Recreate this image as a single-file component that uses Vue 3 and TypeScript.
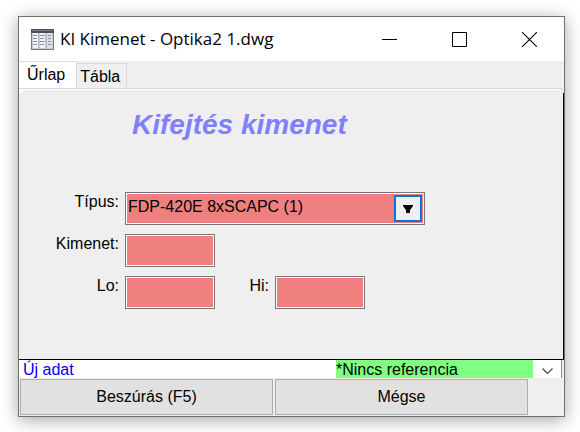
<script setup lang="ts">
import { ref } from 'vue'

const tabs: string[] = ['Űrlap', 'Tábla']
const activeTab = ref<string>('Űrlap')
const types: string[] = ['FDP-420E 8xSCAPC (1)']
const selectedType = ref<string>(types[0])
const output = ref<string>('')
const low = ref<string>('')
const high = ref<string>('')
</script>

<template>
  <main class="window">
    <header class="titlebar">
      <svg class="app-icon" width="23" height="21" viewBox="0 0 23 21" aria-hidden="true">
        <rect x="0" y="0" width="23" height="21" fill="#777a83" />
        <rect x="1" y="4" width="21" height="16" fill="#c9ccd4" />
        <rect x="0" y="0" width="23" height="4" fill="#4c4f60" />
        <rect x="1" y="1" width="21" height="1" fill="#74788a" />
        <rect x="2" y="4" width="5" height="15" fill="#f2f3f6" />
        <rect x="9" y="4" width="5" height="15" fill="#f2f3f6" />
        <rect x="16" y="4" width="5" height="15" fill="#dddfe5" />
        <path d="M2 6.5h4M2 9.5h4M2 12.5h4M2 15.5h4M9 6.5h5M9 9.5h4M9 12.5h5M9 15.5h4M17 6.5h3M17 9.5h3M17 12.5h3M17 15.5h3" stroke="#8b8f9b" fill="none" />
        <path d="M7.5 4v16M15.5 4v16" stroke="#b4b7c1" fill="none" />
      </svg>
      <h1 class="title">KI Kimenet - Optika2 1.dwg</h1>
      <button class="caption" type="button" aria-label="Kis méret">
        <svg width="15" height="15" viewBox="0 0 15 15"><path d="M0 7.5h15" stroke="#000" /></svg>
      </button>
      <button class="caption" type="button" aria-label="Teljes méret">
        <svg width="15" height="15" viewBox="0 0 15 15"><path d="M.5.5h14v14H.5z" stroke="#000" fill="none" /></svg>
      </button>
      <button class="caption" type="button" aria-label="Bezárás">
        <svg width="15" height="15" viewBox="0 0 15 15"><path d="M0 0l15 15M15 0L0 15" stroke="#000" stroke-width="1.1" /></svg>
      </button>
    </header>

    <nav class="tabs" role="tablist">
      <button
        v-for="tab in tabs"
        :key="tab"
        type="button"
        role="tab"
        class="tab"
        :class="{ active: tab === activeTab }"
        :aria-selected="tab === activeTab"
        @click="activeTab = tab"
      >{{ tab }}</button>
    </nav>
    <div class="page-edge"></div>

    <form class="form" @submit.prevent>
      <h2 class="heading">Kifejtés kimenet</h2>
      <div class="fields">
        <label for="type">Típus:</label>
        <div class="field combo">
          <select id="type" v-model="selectedType">
            <option v-for="t in types" :key="t">{{ t }}</option>
          </select>
          <span class="arrow" aria-hidden="true">
            <svg width="10" height="8" viewBox="0 0 10 8"><path d="M0 0h10v1L7 5v3H3V5L0 1z" fill="#000" /></svg>
          </span>
        </div>
        <label for="output">Kimenet:</label>
        <input id="output" v-model="output" class="field" type="text" />
        <label for="low" class="row-start">Lo:</label>
        <input id="low" v-model="low" class="field" type="text" />
        <label for="high">Hi:</label>
        <input id="high" v-model="high" class="field" type="text" />
      </div>
    </form>

    <div class="status">
      <span class="record">Új adat</span>
      <span class="reference">*Nincs referencia</span>
      <button class="more" type="button" aria-label="Lista megnyitása">
        <svg width="11" height="7" viewBox="0 0 11 7"><path d="M.5.5l5 5 5-5" stroke="#444" stroke-width="1.2" fill="none" /></svg>
      </button>
    </div>
    <footer class="actions">
      <button type="button">Beszúrás (F5)</button>
      <button type="button">Mégse</button>
    </footer>
  </main>
</template>

<style>
body {
  margin: 0;
  background: #fff;
}
</style>

<style scoped>
.window {
  margin: 16px 15px 15px 18px;
  border: 1px solid #707070;
  background: #efefef;
  box-shadow: 0 3px 16px rgba(0, 0, 0, 0.36);
  font-family: "Liberation Sans", Arial, sans-serif;
  font-size: 16px;
  line-height: 20px;
  color: #000;
}

button,
input,
select {
  box-sizing: border-box;
  margin: 0;
  padding: 0;
  border: 0;
  border-radius: 0;
  background: none;
  font: inherit;
  color: inherit;
}

.titlebar {
  display: flex;
  align-items: center;
  height: 44px;
  padding-left: 12px;
  background: #fff;
}

.app-icon {
  flex: none;
}

.title {
  flex: 1;
  margin: 0 0 0 6px;
  font-family: "Open Sans", "Noto Sans", sans-serif;
  font-size: 17px;
  font-weight: 400;
  line-height: 24px;
  white-space: nowrap;
}

.caption {
  display: flex;
  align-items: center;
  justify-content: center;
  width: 70px;
  height: 44px;
}

.tabs {
  display: flex;
  align-items: flex-end;
  height: 27px;
}

.tab {
  height: 25px;
  padding: 1px 6px 0 3px;
  border: 1px solid #d9d9d9;
  border-left: 0;
  border-bottom: 0;
}

.tab.active {
  height: 27px;
  padding: 0 11px 0 8px;
  background: #fff;
}

.page-edge {
  height: 4px;
  margin: 0 2px 0 0;
  border: 1px solid #d9d9d9;
  border-bottom: 0;
  border-left: 0;
  box-shadow: inset -1px 1px #fff, inset 4px 0 #fff;
}

.form {
  padding: 15px 0 50px;
  border-right: 1px solid #000;
  border-bottom: 1px solid #000;
}

.heading {
  margin: 0 0 50px 113px;
  font-size: 28px;
  font-style: italic;
  font-weight: 700;
  line-height: 34px;
  color: #8080ff;
}

.fields {
  display: grid;
  grid-template-columns: 100px 90px 48px 90px 54px;
  gap: 9px 6px;
}

.fields label {
  text-align: right;
}

.row-start {
  grid-column: 1;
}

.field {
  height: 33px;
  padding: 0 2px;
  border: 1px solid #777;
  background: #f08080;
  box-shadow: inset 0 0 0 1px #fff;
}

.combo {
  box-sizing: border-box;
  position: relative;
  grid-column: 2 / -1;
}

.combo select {
  width: 100%;
  height: 31px;
  padding-bottom: 4px;
  appearance: none;
}

.arrow {
  position: absolute;
  top: 2px;
  right: 2px;
  box-sizing: border-box;
  display: flex;
  align-items: center;
  justify-content: center;
  width: 28px;
  height: 27px;
  border: 2px solid #0078d7;
  background: #efefef;
  pointer-events: none;
}

.status {
  display: flex;
  height: 18px;
  margin-right: 2px;
  border-right: 1px solid #888;
  background: #fff;
  overflow: hidden;
}

.record {
  flex: 1;
  padding-left: 4px;
  color: #00f;
}

.reference {
  width: 197px;
  background: #80ff80;
}

.more {
  display: flex;
  align-items: center;
  justify-content: center;
  width: 28px;
  height: 22px;
}

.actions {
  display: grid;
  grid-template-columns: 1fr 1fr;
  gap: 2px;
  padding: 1px 36px 1px 1px;
}

.actions button {
  height: 36px;
  border: 1px solid #adadad;
  background: #e1e1e1;
}
</style>
